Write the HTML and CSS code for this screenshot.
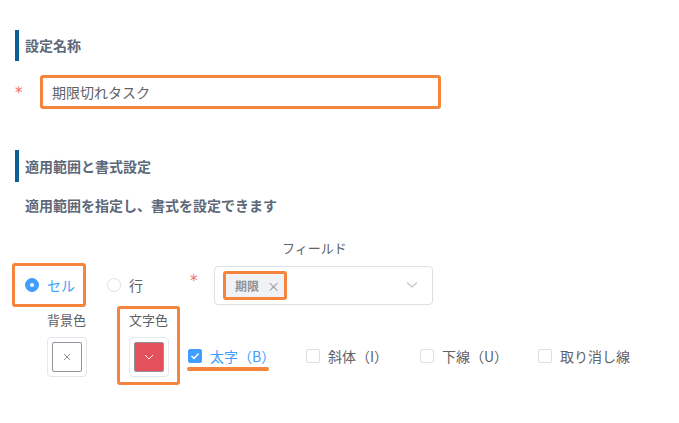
FILE: index.html
```html
<!DOCTYPE html>
<html lang="ja">
<head>
<meta charset="utf-8">
<link rel="stylesheet" href="styles.css">
</head>
<body>
<div class="page">
  <div class="sec-title">設定名称</div>
  <div class="name-row">
    <span class="req">*</span>
    <div class="hl input-hl"><div class="input-text">期限切れタスク</div></div>
  </div>

  <div class="sec-title sec2">適用範囲と書式設定</div>
  <p class="desc">適用範囲を指定し、書式を設定できます</p>

  <div class="field-label">フィールド</div>
  <div class="scope-row">
    <label class="hl radio-hl">
      <span class="radio-dot on"></span><span class="radio-text on">セル</span>
    </label>
    <label class="radio-plain">
      <span class="radio-dot"></span><span class="radio-text">行</span>
    </label>
    <span class="req req-field">*</span>
    <div class="select">
      <span class="hl tag-hl"><span class="tag">期限<span class="tag-x">×</span></span></span>
      <svg class="chev" width="12" height="8" viewBox="0 0 12 8"><path d="M1 1.5 L6 6 L11 1.5" fill="none" stroke="#c0c4cc" stroke-width="1.2"/></svg>
    </div>
  </div>

  <div class="format-row">
    <div class="color-item">
      <div class="color-label">背景色</div>
      <div class="swatch">
        <div class="swatch-inner empty">
          <svg width="8" height="8" viewBox="0 0 8 8"><path d="M1 1 L7 7 M7 1 L1 7" stroke="#909399" stroke-width="1"/></svg>
        </div>
      </div>
    </div>
    <div class="color-item hl">
      <div class="color-label">文字色</div>
      <div class="swatch">
        <div class="swatch-inner red">
          <svg width="10" height="6" viewBox="0 0 10 6"><path d="M1 1 L5 5 L9 1" fill="none" stroke="#ffffff" stroke-width="1"/></svg>
        </div>
      </div>
    </div>
    <div class="checks">
      <div class="cb-under">
        <label class="cb cb-first">
          <span class="box checked"><svg width="10" height="8" viewBox="0 0 10 8"><path d="M1.5 4 L4 6.5 L8.5 1.5" fill="none" stroke="#ffffff" stroke-width="1.4"/></svg></span>
          <span class="cb-text on">太字（B）</span>
        </label>
        <div class="underline"></div>
      </div>
      <label class="cb cb-2"><span class="box"></span><span class="cb-text">斜体（I）</span></label>
      <label class="cb cb-3"><span class="box"></span><span class="cb-text">下線（U）</span></label>
      <label class="cb"><span class="box"></span><span class="cb-text">取り消し線</span></label>
    </div>
  </div>
</div>
</body>
</html>
```

FILE: styles.css
```css
* { box-sizing: border-box; }
html, body {
  margin: 0;
  padding: 0;
  background: #ffffff;
}
body {
  font-family: "Noto Sans CJK JP", "Noto Sans", "Liberation Sans", sans-serif;
  color: #606266;
  width: 679px;
  height: 423px;
  overflow: hidden;
}
.page {
  padding-top: 30px;
}
.sec-title {
  margin-left: 15px;
  height: 31px;
  line-height: 31px;
  border-left: 4px solid #0c5f96;
  padding-left: 6px;
  font-size: 14px;
  font-weight: 700;
  color: #5d6879;
}
.sec2 {
  margin-top: 41px;
  height: 32px;
  line-height: 32px;
}
.name-row {
  display: flex;
  align-items: center;
  margin-top: 14px;
}
.req {
  color: #f56c6c;
  font-family: "DejaVu Sans", sans-serif;
  font-size: 15px;
  line-height: 16px;
  height: 16px;
  width: 25px;
  margin-left: 15px;
  margin-top: 2px;
}
.hl {
  border: 3px solid #f5843c;
  border-radius: 3px;
}
.input-hl {
  width: 401px;
  height: 34px;
}
.input-text {
  padding-left: 9px;
  line-height: 28px;
  font-size: 14px;
  color: #606266;
}
.desc {
  margin: 13px 0 0 25px;
  line-height: 20px;
  font-size: 14px;
  font-weight: 700;
  color: #5d6879;
}
.field-label {
  margin-top: 23px;
  padding-left: 282px;
  line-height: 20px;
  font-size: 13px;
  color: #606266;
}
.scope-row {
  display: flex;
  align-items: center;
  margin-top: 5px;
  height: 44px;
}
.radio-hl {
  display: flex;
  align-items: center;
  margin-left: 12px;
  width: 74px;
  height: 44px;
  padding-left: 10px;
}
.radio-plain {
  display: flex;
  align-items: center;
  margin-left: 21px;
}
.radio-dot {
  width: 14px;
  height: 14px;
  border-radius: 50%;
  border: 1px solid #dcdfe6;
  background: #ffffff;
  position: relative;
  flex: none;
}
.radio-dot.on {
  background: #409eff;
  border-color: #409eff;
}
.radio-dot.on::after {
  content: "";
  position: absolute;
  left: 4px;
  top: 4px;
  width: 4px;
  height: 4px;
  border-radius: 50%;
  background: #ffffff;
}
.radio-text {
  margin-left: 8px;
  font-size: 14px;
  line-height: 20px;
  color: #606266;
}
.radio-text.on {
  color: #409eff;
}
.req-field {
  margin-left: 47px;
  width: 24px;
  align-self: flex-start;
  margin-top: 10px;
}
.select {
  width: 219px;
  height: 39px;
  border: 1px solid #dcdfe6;
  border-radius: 4px;
  display: flex;
  align-items: center;
  justify-content: space-between;
  padding: 0 14px 0 8px;
}
.tag-hl {
  display: flex;
  width: 64px;
  height: 29px;
}
.tag {
  display: flex;
  align-items: center;
  width: 100%;
  height: 100%;
  background: #f0f2f5;
  padding-left: 9px;
  font-size: 12px;
  font-weight: 700;
  color: #909399;
}
.tag-x {
  font-weight: 400;
  font-size: 13px;
  margin-left: 8px;
}
.chev {
  display: block;
}
.format-row {
  display: flex;
  align-items: flex-start;
  margin-top: -1px;
}
.color-item {
  width: 63px;
  height: 79px;
  border: 3px solid transparent;
  display: flex;
  flex-direction: column;
  align-items: center;
}
.color-item:first-child {
  margin-left: 35px;
  margin-right: 19px;
}
.color-item.hl {
  border-color: #f5843c;
}
.color-label {
  margin-top: 2px;
  line-height: 18px;
  font-size: 13px;
  color: #606266;
}
.swatch {
  margin-top: 8px;
  width: 40px;
  height: 40px;
  border: 1px solid #e4e7ed;
  border-radius: 4px;
  padding: 4px;
}
.swatch-inner {
  width: 30px;
  height: 30px;
  border: 1px solid #909399;
  border-radius: 2px;
  display: flex;
  align-items: center;
  justify-content: center;
}
.swatch-inner.red {
  background: #e4515d;
}
.checks {
  display: flex;
  align-items: flex-start;
  margin-top: 40px;
  margin-left: 7px;
}
.cb-under {
  width: 82px;
  margin-right: 37px;
}
.underline {
  margin-top: 1px;
  height: 4px;
  border-radius: 2px;
  background: #f5843c;
}
.cb {
  display: flex;
  align-items: center;
  height: 20px;
  white-space: nowrap;
}
.cb-first {
  padding-left: 1px;
}
.cb-2 { width: 114px; }
.cb-3 { width: 118px; }
.box {
  width: 14px;
  height: 14px;
  border: 1px solid #dcdfe6;
  border-radius: 2px;
  background: #ffffff;
  flex: none;
  display: flex;
  align-items: center;
  justify-content: center;
}
.box.checked {
  background: #409eff;
  border-color: #409eff;
}
.cb-text {
  margin-left: 8px;
  font-size: 14px;
  line-height: 20px;
  color: #606266;
}
.cb-text.on {
  color: #409eff;
}
```
